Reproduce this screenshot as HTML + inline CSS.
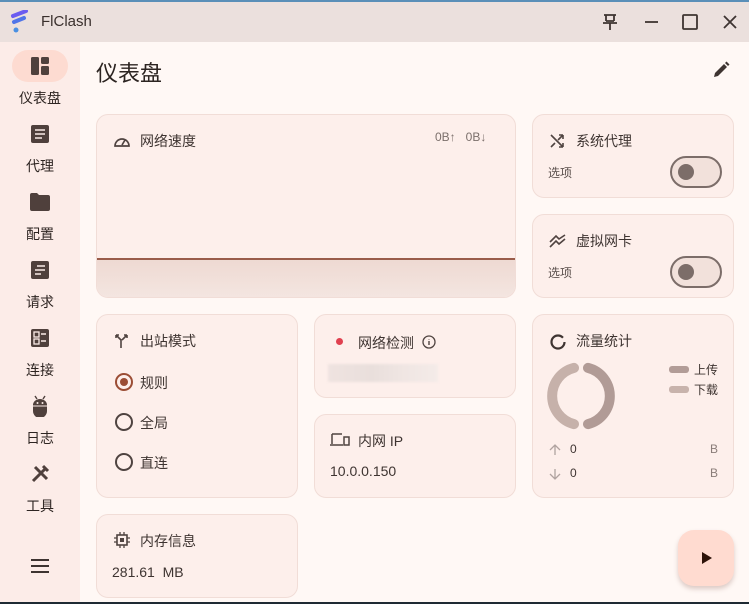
<!DOCTYPE html>
<html><head><meta charset="utf-8"><style>
*{margin:0;padding:0;box-sizing:border-box}
body{width:749px;height:604px;overflow:hidden;background:#fff8f5;font-family:"Liberation Sans","Noto Sans CJK SC",sans-serif;color:#3a2f2c;position:relative}
.top{position:absolute;left:0;top:0;width:749px;height:2px;background:#5a8fb8}
.title{position:absolute;left:0;top:2px;width:749px;height:40px;background:#ebe0dd}
.side{position:absolute;left:0;top:42px;width:80px;height:560px;background:#fcece8}
.bot{position:absolute;left:0;top:602px;width:749px;height:2px;background:#1e2a33}
.card{position:absolute;background:#fdefeb;border:1px solid #f1ddd7;border-radius:12px}
.t{position:absolute;font-size:14px;color:#3e3431}
.nav{position:absolute;left:0;width:80px;text-align:center;font-size:14px;color:#2e2522}
.ic{position:absolute}
.sw{position:absolute;width:52px;height:32px;border:2px solid #7c6d69;border-radius:16px;background:#f2e1db}
.sw::after{content:"";position:absolute;left:6px;top:6px;width:16px;height:16px;border-radius:50%;background:#7c6d69}
.rad{position:absolute;width:18px;height:18px;border:2px solid #4e4340;border-radius:50%}
</style></head><body>
<div class="top"></div>
<div class="title"></div>
<svg class="ic" style="left:10px;top:10px" width="20" height="24" viewBox="0 0 20 24"><path d="M3 6 L16 1" stroke="#6b5cf0" stroke-width="4" stroke-linecap="round"/><path d="M4 12 L14 8" stroke="#5075e8" stroke-width="4" stroke-linecap="round"/><circle cx="6" cy="20" r="2.5" fill="#4a90e2"/></svg>
<div class="t" style="left:41px;top:13px;font-size:15px;color:#3a302d">FlClash</div>
<svg class="ic" style="left:600px;top:12px" width="20" height="20" viewBox="0 0 20 20" fill="none" stroke="#3e3431" stroke-width="1.8"><path d="M4 3h12M6 3v6M14 3v6M3 11h14M10 11v7M6 9h8"/></svg>
<svg class="ic" style="left:642px;top:12px" width="20" height="20"><path d="M3 10h13" stroke="#3e3431" stroke-width="1.8"/></svg>
<svg class="ic" style="left:680px;top:12px" width="20" height="20"><rect x="3" y="3" width="14" height="14" rx="1" fill="none" stroke="#3e3431" stroke-width="1.8"/></svg>
<svg class="ic" style="left:720px;top:12px" width="20" height="20"><path d="M4 4l12 12M16 4L4 16" stroke="#3e3431" stroke-width="1.8"/></svg>

<div class="side"></div>
<div style="position:absolute;left:12px;top:50px;width:56px;height:32px;border-radius:16px;background:#fddbd1"></div>
<svg class="ic" style="left:30px;top:56px" width="20" height="20"><rect x="1" y="1" width="8" height="18" rx="1.5" fill="#4f403c"/><rect x="11" y="1" width="8" height="7" rx="1.5" fill="#4f403c"/><rect x="11" y="10" width="8" height="9" rx="1.5" fill="#4f403c"/></svg>
<div class="nav" style="top:88px">仪表盘</div>
<svg class="ic" style="left:31px;top:125px" width="18" height="18"><rect x="0" y="0" width="18" height="18" rx="2" fill="#4f403c"/><path d="M4 5h10M4 9h10M4 13h7" stroke="#fcece8" stroke-width="1.6"/></svg>
<div class="nav" style="top:156px">代理</div>
<svg class="ic" style="left:30px;top:193px" width="20" height="18"><path d="M0 2a2 2 0 0 1 2-2h5l2 2h9a2 2 0 0 1 2 2v12a2 2 0 0 1-2 2H2a2 2 0 0 1-2-2z" fill="#4f403c"/></svg>
<div class="nav" style="top:224px">配置</div>
<svg class="ic" style="left:31px;top:261px" width="18" height="18"><rect width="18" height="18" rx="2" fill="#4f403c"/><path d="M6 5h8M4 9h10M4 13h6" stroke="#fcece8" stroke-width="1.6"/></svg>
<div class="nav" style="top:292px">请求</div>
<svg class="ic" style="left:31px;top:329px" width="18" height="18"><rect width="18" height="18" rx="2" fill="#4f403c"/><rect x="3" y="3" width="5" height="5" fill="none" stroke="#fcece8" stroke-width="1.3"/><rect x="3" y="10" width="5" height="5" fill="none" stroke="#fcece8" stroke-width="1.3"/><path d="M10 5h5M10 12h5" stroke="#fcece8" stroke-width="1.4"/></svg>
<div class="nav" style="top:360px">连接</div>
<svg class="ic" style="left:32px;top:395px" width="16" height="22"><path d="M3 1l2 3M13 1l-2 3" stroke="#4f403c" stroke-width="1.4"/><path d="M1 10a7 6 0 0 1 14 0v6a6 6 0 0 1-14 0z" fill="#4f403c"/><circle cx="5.5" cy="8" r="1" fill="#fcece8"/><circle cx="10.5" cy="8" r="1" fill="#fcece8"/><path d="M1 11h14" stroke="#fcece8" stroke-width="1"/></svg>
<div class="nav" style="top:428px">日志</div>
<svg class="ic" style="left:30px;top:464px" width="20" height="20"><path d="M3 17L15 5M5 3l12 12" stroke="#4f403c" stroke-width="3"/><path d="M13 2l5 5" stroke="#4f403c" stroke-width="3"/></svg>
<div class="nav" style="top:496px">工具</div>
<svg class="ic" style="left:30px;top:558px" width="20" height="16"><path d="M1 2h18M1 8h18M1 14h18" stroke="#3e3431" stroke-width="2"/></svg>

<div class="t" style="left:96px;top:56px;font-size:22px;color:#2c2421">仪表盘</div>
<svg class="ic" style="left:711px;top:60px" width="20" height="20"><path d="M3 17l1-4L13 4l3 3-9 9z" fill="#3e3431"/><path d="M14 3l1.5-1.5 3 3L17 6z" fill="#3e3431"/></svg>

<!-- speed -->
<div class="card" style="left:96px;top:114px;width:420px;height:184px;overflow:hidden">
<div style="position:absolute;left:0;top:144px;width:100%;height:40px;background:linear-gradient(#eed9d2,#f4e6e1)"></div>
<div style="position:absolute;left:0;top:143px;width:100%;height:2px;background:#9a5c4a"></div>
</div>
<svg class="ic" style="left:113px;top:133px" width="18" height="16"><path d="M2 13a7 7 0 1 1 14 0z" fill="none" stroke="#4f4340" stroke-width="1.7"/><path d="M9 12l3-5" stroke="#4f4340" stroke-width="1.7"/></svg>
<div class="t" style="left:140px;top:131px">网络速度</div>
<div class="t" style="left:435px;top:130px;font-size:12px;color:#7b6f6b">0B↑&nbsp;&nbsp;&nbsp;0B↓</div>

<!-- system proxy -->
<div class="card" style="left:532px;top:114px;width:202px;height:84px"></div>
<svg class="ic" style="left:549px;top:133px" width="16" height="16"><path d="M2 2l12 12M14 14v-4M14 14h-4M14 2L9 7M14 2h-4M14 2v4M2 14l4-4" fill="none" stroke="#4f4340" stroke-width="1.6"/></svg>
<div class="t" style="left:576px;top:131px">系统代理</div>
<div class="t" style="left:548px;top:164px;font-size:12px;color:#5a4f4c">选项</div>
<div class="sw" style="left:670px;top:156px"></div>

<div class="card" style="left:532px;top:214px;width:202px;height:84px"></div>
<svg class="ic" style="left:549px;top:234px" width="18" height="14"><path d="M1 8l6-6 3 3 6-4M1 13l6-6 3 3 6-5" fill="none" stroke="#4f4340" stroke-width="1.6"/></svg>
<div class="t" style="left:576px;top:231px">虚拟网卡</div>
<div class="t" style="left:548px;top:264px;font-size:12px;color:#5a4f4c">选项</div>
<div class="sw" style="left:670px;top:256px"></div>

<!-- outbound -->
<div class="card" style="left:96px;top:314px;width:202px;height:184px"></div>
<svg class="ic" style="left:114px;top:333px" width="16" height="16"><path d="M2 2l5 5v8M13 2L8 7M2 2h3M2 2v3M13 2h-3M13 2v3" fill="none" stroke="#4f4340" stroke-width="1.6"/></svg>
<div class="t" style="left:140px;top:331px">出站模式</div>
<div class="rad" style="left:115px;top:373px;border-color:#9b4d35"></div><div style="position:absolute;left:120px;top:378px;width:8px;height:8px;border-radius:50%;background:#9b4d35"></div>
<div class="t" style="left:140px;top:373px">规则</div>
<div class="rad" style="left:115px;top:413px"></div><div class="t" style="left:140px;top:413px">全局</div>
<div class="rad" style="left:115px;top:453px"></div><div class="t" style="left:140px;top:453px">直连</div>

<!-- network check -->
<div class="card" style="left:314px;top:314px;width:202px;height:84px"></div>
<div style="position:absolute;left:336px;top:338px;width:7px;height:7px;border-radius:50%;background:#e0404f"></div>
<div class="t" style="left:358px;top:333px">网络检测</div>
<svg class="ic" style="left:422px;top:335px" width="14" height="14"><circle cx="7" cy="7" r="6" fill="none" stroke="#4f4340" stroke-width="1.3"/><path d="M7 6v4M7 4v.5" stroke="#4f4340" stroke-width="1.4"/></svg>
<div style="position:absolute;left:328px;top:364px;width:110px;height:18px;background:linear-gradient(90deg,#efe3e0,#e9dfdc 40%,#f0e6e3 70%,#f4ebe8);filter:blur(1px)"></div>

<div class="card" style="left:314px;top:414px;width:202px;height:84px"></div>
<svg class="ic" style="left:330px;top:433px" width="20" height="14"><path d="M2 1h10M2 1v10M0 12h13" fill="none" stroke="#4f4340" stroke-width="1.5"/><rect x="14" y="4" width="5" height="8" fill="none" stroke="#4f4340" stroke-width="1.5"/></svg>
<div class="t" style="left:358px;top:431px">内网 IP</div>
<div class="t" style="left:330px;top:463px">10.0.0.150</div>

<!-- traffic -->
<div class="card" style="left:532px;top:314px;width:202px;height:184px"></div>
<svg class="ic" style="left:549px;top:333px" width="18" height="18"><circle cx="9" cy="9" r="6.5" fill="none" stroke="#3e3431" stroke-width="2.2" stroke-dasharray="36 5"/></svg>
<div class="t" style="left:576px;top:331px">流量统计</div>
<svg class="ic" style="left:544px;top:359px" width="74" height="74"><path d="M44 8.9A29 29 0 0 1 44 65.1" fill="none" stroke="#b19b96" stroke-width="10" stroke-linecap="round"/><path d="M30 65.1A29 29 0 0 1 30 8.9" fill="none" stroke="#c6b1aa" stroke-width="10" stroke-linecap="round"/></svg>
<div style="position:absolute;left:669px;top:366px;width:20px;height:7px;border-radius:3px;background:#b29c97"></div>
<div class="t" style="left:694px;top:361px;font-size:12px">上传</div>
<div style="position:absolute;left:669px;top:386px;width:20px;height:7px;border-radius:3px;background:#c8b3ac"></div>
<div class="t" style="left:694px;top:381px;font-size:12px">下载</div>
<svg class="ic" style="left:549px;top:444px" width="12" height="12"><path d="M6 11V1M1 6l5-5 5 5" fill="none" stroke="#b0a3a0" stroke-width="1.3"/></svg>
<div class="t" style="left:570px;top:442px;font-size:12px">0</div>
<div class="t" style="left:710px;top:442px;font-size:12px;color:#8a7d79">B</div>
<svg class="ic" style="left:549px;top:468px" width="12" height="12"><path d="M6 1v10M1 6l5 5 5-5" fill="none" stroke="#b0a3a0" stroke-width="1.3"/></svg>
<div class="t" style="left:570px;top:466px;font-size:12px">0</div>
<div class="t" style="left:710px;top:466px;font-size:12px;color:#8a7d79">B</div>

<!-- memory -->
<div class="card" style="left:96px;top:514px;width:202px;height:84px"></div>
<svg class="ic" style="left:114px;top:532px" width="16" height="16"><rect x="3" y="3" width="10" height="10" fill="none" stroke="#4f4340" stroke-width="1.6"/><rect x="6" y="6" width="4" height="4" fill="#4f4340"/><path d="M6 0v3M10 0v3M6 13v3M10 13v3M0 6h3M0 10h3M13 6h3M13 10h3" stroke="#4f4340" stroke-width="1.3"/></svg>
<div class="t" style="left:140px;top:531px">内存信息</div>
<div class="t" style="left:112px;top:564px">281.61&nbsp;&nbsp;MB</div>

<div style="position:absolute;left:678px;top:530px;width:56px;height:56px;border-radius:16px;background:#ffdbd0;box-shadow:0 3px 5px rgba(120,70,60,.25)"></div>
<svg class="ic" style="left:701px;top:551px" width="12" height="14"><path d="M1 1l10 6-10 6z" fill="#2e1208"/></svg>
<div class="bot"></div>
</body></html>
